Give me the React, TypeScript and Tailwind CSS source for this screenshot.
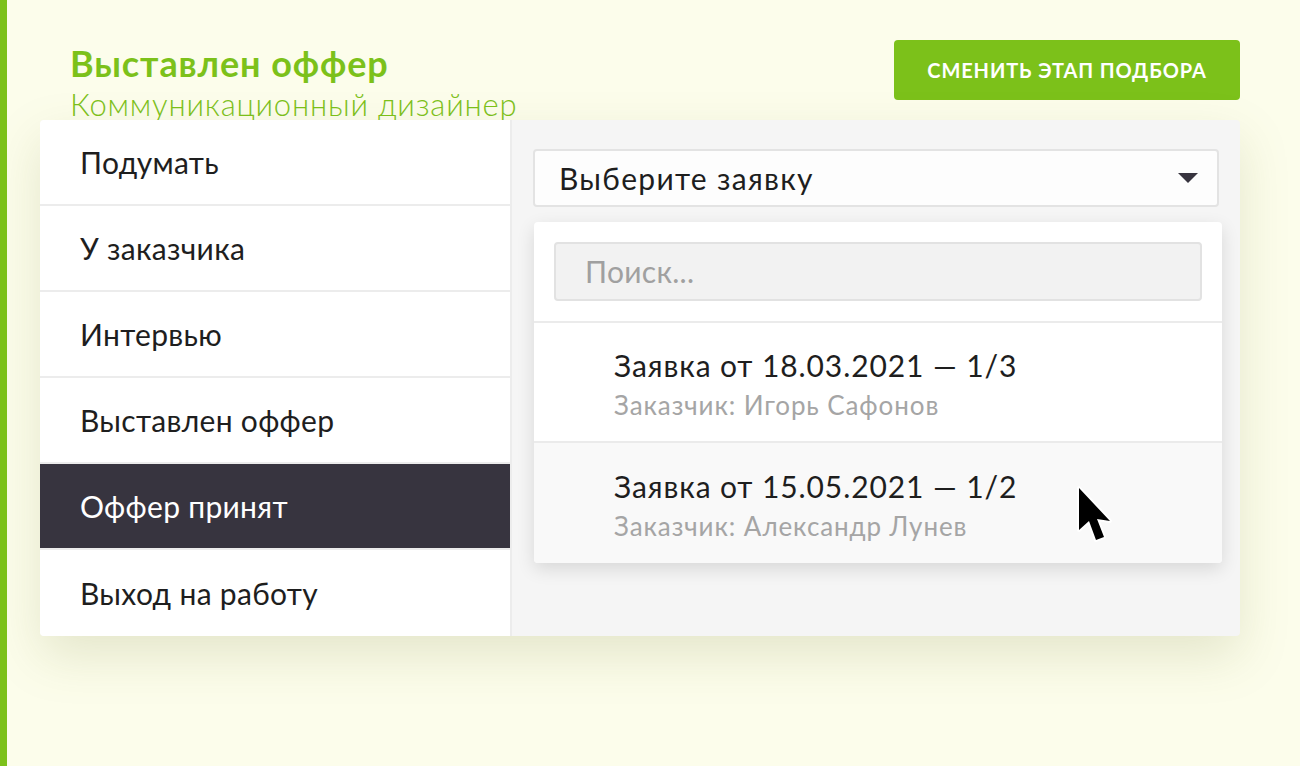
const stages = ['Подумать', 'У заказчика', 'Интервью', 'Выставлен оффер', 'Оффер принят', 'Выход на работу'];

const requests = [
  { title: 'Заявка от 18.03.2021 — 1/3', client: 'Заказчик: Игорь Сафонов' },
  { title: 'Заявка от 15.05.2021 — 1/2', client: 'Заказчик: Александр Лунев' },
];

function Cursor() {
  return (
    <svg className="absolute left-[1068px] top-[484px] z-20" width="40" height="64" viewBox="-4 -4 40 64">
      <path
        d="M0 0 L0 42 L10 33 L17 52 L25 49 L18 31 L31 33 Z"
        fill="#000"
        stroke="#fff"
        strokeWidth="4"
        strokeLinejoin="round"
        paintOrder="stroke"
      />
    </svg>
  );
}

export default function App() {
  const active = 'Оффер принят';

  return (
    <div className="relative h-[766px] w-[1300px] overflow-hidden border-l-[7px] border-[#7cc11a] bg-[#fcfdeb] font-['Lato','Noto_Sans',sans-serif]">
      <div className="ml-[33px] w-[1200px]">
        <div className="flex h-[120px] justify-between pl-[30px]">
          <div className="pt-[40px]">
            <div className="text-[36px] font-bold leading-[46px] tracking-[0.9px] text-[#7cc11a]">Выставлен оффер</div>
            <div className="-mt-[2px] text-[31px] font-light leading-[40px] tracking-[0.8px] text-[#7cc11a]">Коммуникационный дизайнер</div>
          </div>
          <button className="mt-[40px] h-[60px] w-[346px] rounded-[4px] bg-[#7cc11a] text-[20px] font-bold tracking-[0.9px] text-white">
            СМЕНИТЬ ЭТАП ПОДБОРА
          </button>
        </div>

        <div className="relative z-10 flex h-[516px] overflow-hidden rounded-[4px] bg-[#f5f5f5] shadow-[0_20px_50px_rgba(120,130,60,0.18)]">
          <div className="flex w-[472px] flex-col border-r-2 border-[#ececec] bg-white">
            {stages.map((s, i) => (
              <div
                key={s}
                className={
                  'flex h-[86px] items-center pl-[40px] text-[30px] tracking-[0.3px] ' +
                  (s === active ? 'bg-[#37343f] text-white' : 'text-[#1e1e1e]') +
                  (i < stages.length - 1 ? ' border-b-2 border-[#ececec]' : '')
                }
              >
                {s}
              </div>
            ))}
          </div>

          <div className="flex-1 px-[21px] pt-[29px]">
            <div className="flex h-[58px] items-center justify-between rounded-[4px] border-2 border-[#e3e3e3] bg-[#fdfdfd] pl-[24px] pr-[19px]">
              <span className="text-[30px] tracking-[1.3px] text-[#1e1e1e]">Выберите заявку</span>
              <svg width="20" height="10" viewBox="0 0 20 10">
                <path d="M0 0 L20 0 L10 10 Z" fill="#37343f" />
              </svg>
            </div>

            <div className="ml-[1px] mr-[-3px] mt-[15px] overflow-hidden rounded-[4px] bg-white shadow-[0_6px_18px_rgba(0,0,0,0.12)]">
              <div className="border-b-2 border-[#ebebeb] px-[20px] py-[20px]">
                <div className="flex h-[59px] items-center rounded-[4px] border-2 border-[#e2e2e2] bg-[#f2f2f2] pl-[29px] text-[30px] tracking-[0.3px] text-[#a0a0a0]">
                  Поиск...
                </div>
              </div>
              {requests.map((r, i) => (
                <div
                  key={r.title}
                  className={
                    'flex h-[120px] flex-col justify-center pl-[80px] pt-[6px] ' +
                    (i === 0 ? 'border-b-2 border-[#ebebeb] bg-white' : 'bg-[#f9f9f9]')
                  }
                >
                  <div className="text-[30px] leading-[40px] tracking-[0.9px] text-[#1e1e1e]">{r.title}</div>
                  <div className="text-[26px] leading-[40px] tracking-[0.9px] text-[#a5a5a5]">{r.client}</div>
                </div>
              ))}
            </div>
          </div>
        </div>
      </div>
      <Cursor />
    </div>
  );
}
